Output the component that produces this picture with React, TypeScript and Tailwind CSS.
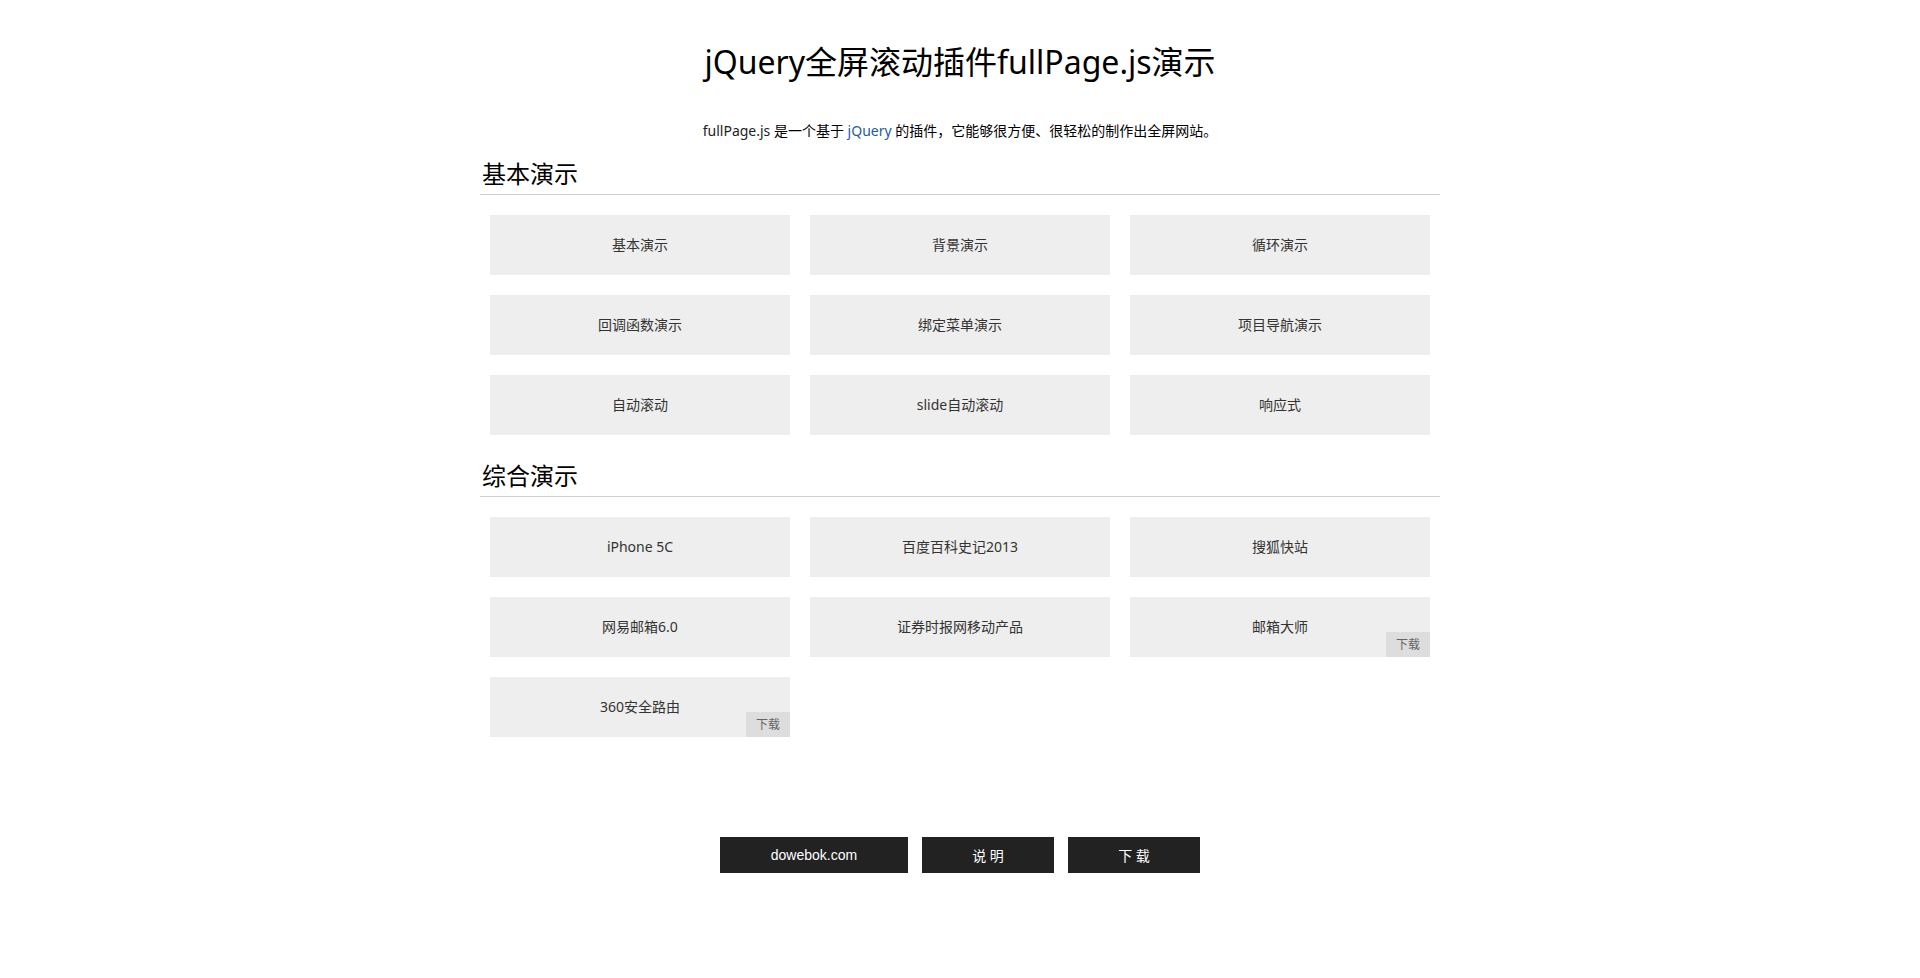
import React from "react";

const font = { fontFamily: '"Noto Sans", "Noto Sans CJK SC", sans-serif' };

type Item = { label: string; badge?: boolean };

const basic: Item[] = [
  { label: "基本演示" },
  { label: "背景演示" },
  { label: "循环演示" },
  { label: "回调函数演示" },
  { label: "绑定菜单演示" },
  { label: "项目导航演示" },
  { label: "自动滚动" },
  { label: "slide自动滚动" },
  { label: "响应式" },
];

const combo: Item[] = [
  { label: "iPhone 5C" },
  { label: "百度百科史记2013" },
  { label: "搜狐快站" },
  { label: "网易邮箱6.0" },
  { label: "证券时报网移动产品" },
  { label: "邮箱大师", badge: true },
  { label: "360安全路由", badge: true },
];

function Grid({ items }: { items: Item[] }) {
  return (
    <div className="grid grid-cols-[300px_300px_300px] gap-[20px] px-[10px] pt-[20px]">
      {items.map((it) => (
        <a
          key={it.label}
          className="relative flex h-[60px] items-center justify-center bg-[#eeeeee] pb-[1px] text-[14px] text-[#333333]"
        >
          {it.label}
          {it.badge && (
            <span className="absolute bottom-0 right-0 flex h-[25px] w-[44px] items-center justify-center bg-[#dddddd] text-[12px] text-[#666666]">
              下载
            </span>
          )}
        </a>
      ))}
    </div>
  );
}

function Header({ title, className }: { title: string; className: string }) {
  return (
    <h2
      className={
        "border-b border-[#d0d0d0] pb-[4px] pl-[2px] text-[24px] leading-[32px] text-black " +
        className
      }
    >
      {title}
    </h2>
  );
}

export default function App() {
  return (
    <div className="min-h-[978px] w-full bg-white" style={font}>
      <div className="mx-auto w-[960px]">
        <h1 className="pt-[40px] text-center text-[32px] leading-[44px] text-black">
          jQuery全屏滚动插件fullPage.js演示
        </h1>
        <p className="mt-[37px] text-center text-[14px] leading-[20px] text-black">
          <span className="text-[#222222]">fullPage.js</span> 是一个基于{" "}
          <span className="text-[#1f5c99]">jQuery</span>{" "}
          的插件，它能够很方便、很轻松的制作出全屏网站。
        </p>
        <Header title="基本演示" className="mt-[17px]" />
        <Grid items={basic} />
        <Header title="综合演示" className="mt-[25px]" />
        <Grid items={combo} />
        <div className="mt-[100px] flex justify-center gap-[14px]">
          <a
            className="flex h-[36px] w-[188px] items-center justify-center bg-[#222222] text-[14px] text-white"
            style={{ fontFamily: '"Liberation Sans", Arial, sans-serif' }}
          >
            dowebok.com
          </a>
          <a className="flex h-[36px] w-[132px] items-center justify-center bg-[#222222] text-[14px] text-white">
            说 明
          </a>
          <a className="flex h-[36px] w-[132px] items-center justify-center bg-[#222222] text-[14px] text-white">
            下 载
          </a>
        </div>
      </div>
    </div>
  );
}
